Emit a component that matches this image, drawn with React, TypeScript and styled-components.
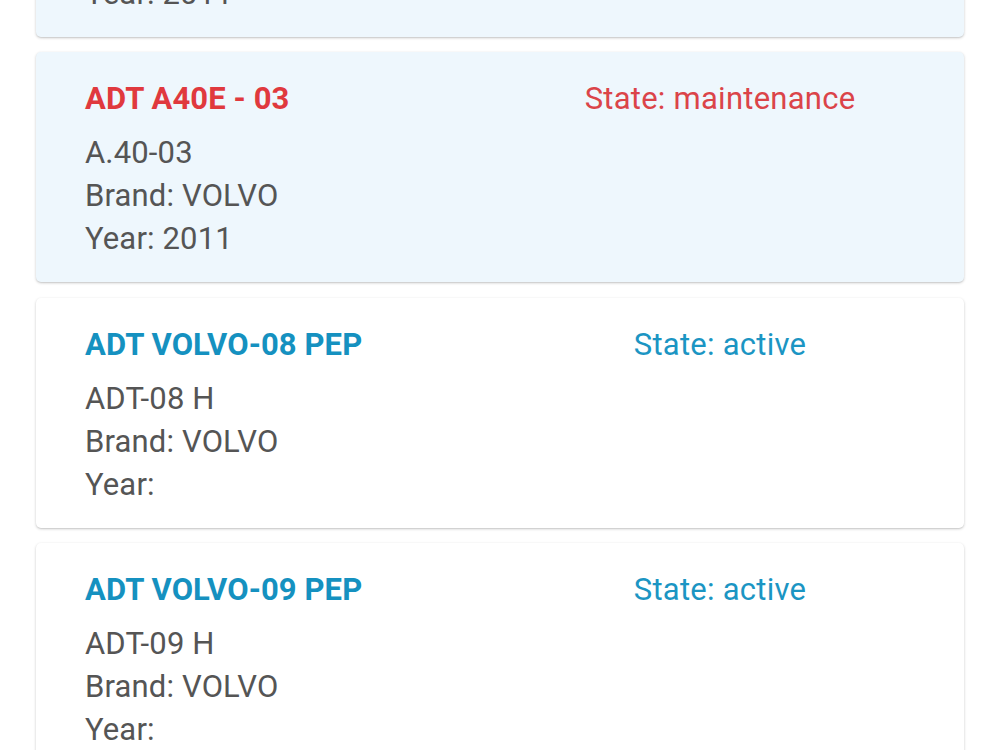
import React from "react";
import styled, { createGlobalStyle } from "styled-components";

interface Machine {
  name: string;
  code: string;
  brand: string;
  year: string;
  state: "active" | "maintenance";
}

const machines: Machine[] = [
  { name: "ADT A40E - 02", code: "A.40-02", brand: "VOLVO", year: "2011", state: "maintenance" },
  { name: "ADT A40E - 03", code: "A.40-03", brand: "VOLVO", year: "2011", state: "maintenance" },
  { name: "ADT VOLVO-08 PEP", code: "ADT-08 H", brand: "VOLVO", year: "", state: "active" },
  { name: "ADT VOLVO-09 PEP", code: "ADT-09 H", brand: "VOLVO", year: "", state: "active" },
  { name: "ADT VOLVO-10 PEP", code: "ADT-10 H", brand: "VOLVO", year: "", state: "active" },
];

const App: React.FC = () => {
  return (
    <>
      <GlobalStyle />
      <List>
        {machines.map((m) => {
          const warn = m.state === "maintenance";
          return (
            <Card key={m.name} $warn={warn}>
              <Header>
                <Title $warn={warn}>{m.name}</Title>
                <State $warn={warn}>State: {m.state}</State>
              </Header>
              <Line>{m.code}</Line>
              <Line>Brand: {m.brand}</Line>
              <Line>Year: {m.year}</Line>
            </Card>
          );
        })}
      </List>
    </>
  );
};

// CSS
const GlobalStyle = createGlobalStyle`
  html, body {
    margin: 0;
    padding: 0;
    background: #ffffff;
    font-family: Roboto, "Noto Sans", Arial, sans-serif;
    overflow: hidden;
  }
`;

const List = styled.div`
  display: flex;
  flex-direction: column;
  gap: 15.5px;
  margin-top: -193.5px;
  padding: 0 36px;
`;

const Card = styled.div<{ $warn: boolean }>`
  background: ${(p) => (p.$warn ? "#eef7fd" : "#ffffff")};
  border-radius: 5px;
  box-shadow: 0 1px 3px rgba(0, 0, 0, 0.2), 0 1px 1px rgba(0, 0, 0, 0.06);
  padding: 25px 49px 22px;
`;

const Header = styled.div`
  display: grid;
  grid-template-columns: 1fr 390px;
  align-items: baseline;
  margin-bottom: 11px;
`;

const Title = styled.div<{ $warn: boolean }>`
  font-size: 31px;
  line-height: 43px;
  font-weight: 700;
  letter-spacing: 0.1px;
  color: ${(p) => (p.$warn ? "#e0393e" : "#1591c0")};
`;

const State = styled.div<{ $warn: boolean }>`
  font-size: 31px;
  line-height: 43px;
  letter-spacing: 0.25px;
  text-align: center;
  color: ${(p) => (p.$warn ? "#db4449" : "#1b95c3")};
`;

const Line = styled.div`
  font-size: 31px;
  line-height: 43px;
  letter-spacing: 0.15px;
  color: #555555;
`;

export default App;
